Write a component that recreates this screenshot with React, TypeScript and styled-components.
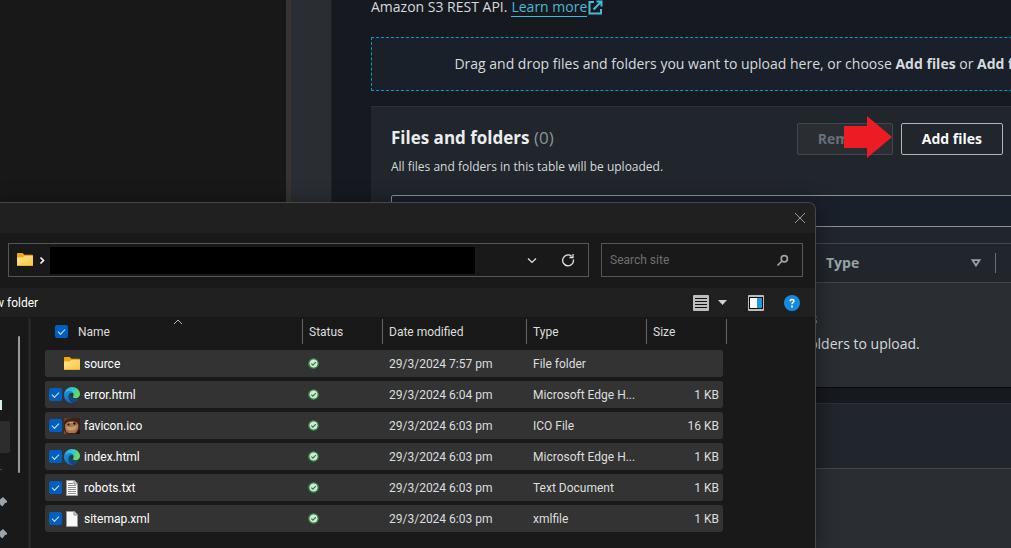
import React from "react";
import styled, { createGlobalStyle } from "styled-components";

const GlobalStyle = createGlobalStyle`
  *, *::before, *::after { box-sizing: border-box; }
  html, body, #root { height: 100%; }
  body {
    margin: 0;
    background: #171921;
    color: #d5dbdb;
    font-family: "Open Sans", "Noto Sans", sans-serif;
    font-size: 14px;
    line-height: 20px;
    overflow: hidden;
  }
`;

/* ---------- Console page ---------- */

const Page = styled.div`
  display: flex;
  height: 100%;
  position: relative;
  overflow: hidden;
`;

const Backdrop = styled.div`
  flex: none;
  width: 286px;
  background: #181818;
`;

const WindowEdge = styled.div`
  flex: none;
  width: 5px;
  background: #373432;
`;

const NavRail = styled.div`
  flex: none;
  width: 41px;
  background: #2a2e33;
  border-right: 1px solid #1e2126;
`;

const Main = styled.main`
  flex: 1;
  min-width: 0;
  overflow: hidden;
  padding: 0 0 0 39px;
`;

const Content = styled.div`
  min-width: 766px;
  display: flex;
  flex-direction: column;
`;

const Intro = styled.p`
  margin: 0;
  height: 17px;
  display: flex;
  align-items: flex-end;
`;

const ExternalLink = styled.a`
  display: flex;
  align-items: center;
  gap: 1px;
  margin-left: 4px;
  color: #44b9d6;
  text-decoration: none;

  span {
    line-height: 19px;
    border-bottom: 1px solid #44b9d6;
  }
`;

const DropZone = styled.div`
  margin-top: 20px;
  height: 54px;
  display: flex;
  align-items: center;
  justify-content: center;
  border: 1px dashed #00a1c9;
  background: #1a202a;
  white-space: pre;
`;

const Card = styled.section`
  margin-top: 15px;
  background: #21252c;
  border-top: 1px solid #2d3136;
  border-bottom: 1px solid #08090b;
`;

const CardHeader = styled.header`
  display: flex;
  justify-content: space-between;
  align-items: flex-start;
  padding: 16px 134px 0 20px;
`;

const CardTitle = styled.h2`
  margin: 4px 0 0;
  font-size: 17px;
  line-height: 22px;
  font-weight: 700;
  color: #eaeded;

  span {
    font-weight: 400;
    color: #879596;
  }
`;

const CardNote = styled.p`
  margin: 8px 0 0;
  font-size: 12px;
  line-height: 20px;
`;

const Actions = styled.div`
  display: flex;
  gap: 8px;
`;

const ActionButton = styled.button`
  height: 32px;
  padding: 0 20px;
  border: 1px solid #aab7b8;
  border-radius: 2px;
  background: #21252c;
  color: #fafafa;
  font: inherit;
  font-weight: 700;

  &:disabled {
    width: 96px;
    border-color: #414750;
    background: #2a2e33;
    color: #687078;
  }
`;

const FilterInput = styled.input`
  display: block;
  width: calc(100% - 40px);
  height: 32px;
  margin: 18px 20px 16px;
  border: 1px solid #879596;
  border-radius: 2px;
  background: #1a202a;
`;

const UploadTable = styled.table`
  width: 100%;
  table-layout: fixed;
  border-collapse: collapse;
`;

const UploadHead = styled.th`
  height: 39px;
  padding: 0;
  border-top: 1px solid #414750;
  border-bottom: 1px solid #414750;
  color: #95a5a6;
  text-align: left;

  &:first-child { width: 455px; }
  &:nth-child(2) { width: 170px; }
`;

const UploadHeadInner = styled.div`
  display: flex;
  align-items: center;
  justify-content: space-between;
  height: 20px;
  padding-right: 14px;
  border-right: 1px solid #687078;
`;

const EmptyCell = styled.td`
  height: 104px;
  padding: 0 0 6px 2px;
  background: #2a2e33;
  text-align: center;
  vertical-align: middle;

  strong {
    display: block;
    margin-bottom: 5px;
  }
`;

const CardBar = styled.div`
  height: 65px;
  border-bottom: 1px solid #414750;
`;

const CardFill = styled.div`
  height: 140px;
  background: #2a2e33;
`;

const Pointer = styled.svg`
  position: absolute;
  left: 844px;
  top: 116px;
  width: 49px;
  height: 42px;
`;

/* ---------- File picker window ---------- */

const Picker = styled.div`
  position: absolute;
  left: 0;
  top: 202px;
  bottom: 0;
  width: 816px;
  display: flex;
  flex-direction: column;
  overflow: hidden;
  border: solid #46474b;
  border-width: 1px 1px 0 0;
  border-radius: 0 8px 0 0;
  background: #191919;
  box-shadow: 0 2px 22px rgba(0, 0, 0, 0.45);
  color: #dedede;
  font-family: Roboto, "Open Sans", sans-serif;
  font-size: 12px;
  line-height: 16px;
`;

const TitleBar = styled.div`
  flex: none;
  display: flex;
  align-items: center;
  justify-content: flex-end;
  height: 30px;
  padding-right: 9px;
  background: #202020;
`;

const IconButton = styled.button`
  display: flex;
  padding: 0;
  border: 0;
  background: none;
  color: inherit;
`;

const AddressRow = styled.div`
  flex: none;
  display: flex;
  gap: 12px;
  padding: 10px 12px 11px 8px;
`;

const AddressBar = styled.div`
  flex: 1;
  display: flex;
  align-items: center;
  height: 34px;
  padding: 0 13px 0 8px;
  border: 1px solid #565656;
`;

const RedactedPath = styled.div`
  flex: 1;
  height: 27px;
  margin: 0 52px 0 1px;
  background: #000;
`;

const AddressTools = styled.div`
  display: flex;
  align-items: center;
  gap: 24px;
`;

const SearchBox = styled.label`
  flex: none;
  display: flex;
  align-items: center;
  width: 202px;
  height: 34px;
  padding: 0 13px 0 8px;
  border: 1px solid #565656;
`;

const SearchInput = styled.input`
  flex: 1;
  min-width: 0;
  padding: 0;
  border: 0;
  outline: 0;
  background: none;
  color: inherit;
  font: inherit;

  &::placeholder { color: #6f6f6f; opacity: 1; }
`;

const CommandBar = styled.div`
  flex: none;
  display: flex;
  align-items: center;
  justify-content: space-between;
  height: 30px;
  padding-right: 15px;
  background: #202020;
  border-bottom: 1px solid #171717;
`;

const NewFolder = styled.button`
  padding: 0;
  border: 0;
  margin-left: -5px;
  background: none;
  color: #fff;
  font: inherit;
`;

const ViewTools = styled.div`
  display: flex;
  align-items: center;

  button:nth-child(2) { margin: 0 21px 0 9px; }
  button:nth-child(4) { margin-left: 20px; }
`;

const Body = styled.div`
  flex: 1;
  display: flex;
  min-height: 0;
`;

const Tree = styled.div`
  flex: none;
  width: 10px;
  padding-top: 82px;
  overflow: hidden;
  color: #9ba3ab;
`;

const TreeLabel = styled.div`
  height: 10px;
  margin-bottom: 11px;
  border-left: 2px solid #d8f0e2;
`;

const TreeSelected = styled.div`
  height: 32px;
  border-radius: 0 2px 2px 0;
  background: #2d2d2d;
`;

const TreeRule = styled.div`
  width: 2px;
  height: 1px;
  margin: 16px 0 26px;
  background: #4a4a4a;
`;

const PinIcon = styled.svg`
  display: block;
  width: 8px;
  height: 12px;
  margin-bottom: 20px;
`;

const ScrollThumb = styled.div`
  flex: none;
  width: 2px;
  height: 137px;
  margin: 18px 8px 0;
  border-radius: 1px;
  background: #9b9b9b;
`;

const Splitter = styled.div`
  flex: none;
  width: 3px;
  background: #2b2b2b;
  border: solid #222;
  border-width: 0 1px;
`;

const FileTable = styled.table`
  flex: none;
  align-self: flex-start;
  width: 682px;
  margin-left: 14px;
  table-layout: fixed;
  border-collapse: separate;
  border-spacing: 0;
`;

const Column = styled.col<{ $width: number }>`
  width: ${(p) => p.$width}px;
`;

const HeadCell = styled.th`
  height: 28px;
  padding: 1px 0 0;
  font-weight: 400;
  text-align: left;
  vertical-align: top;
`;

const HeadInner = styled.div<{ $inset: number }>`
  position: relative;
  display: flex;
  align-items: center;
  gap: 10px;
  height: 25px;
  padding-left: ${(p) => p.$inset}px;
  border-right: 1px solid #636363;
`;

const SortMark = styled.svg`
  position: absolute;
  top: 0;
  left: 128px;
  width: 10px;
  height: 6px;
`;

const Cell = styled.td`
  height: 31px;
  padding: 0 0 0 6px;
  border-top: 4px solid transparent;
  background: #333;
  background-clip: padding-box;
  overflow: hidden;
  white-space: nowrap;

  &:first-child {
    padding-left: 4px;
    border-radius: 2px 0 0 2px / 6px 0 0 2px;
  }
  &:last-child {
    padding: 0 4px 0 0;
    border-radius: 0 2px 2px 0 / 0 6px 2px 0;
    text-align: right;
  }
`;

const NameInner = styled.div`
  display: flex;
  align-items: center;
  color: #fff;

  svg { margin: 0 4px 0 2px; }
`;

const Tick = styled.input`
  appearance: none;
  display: grid;
  place-items: center;
  flex: none;
  width: 13px;
  height: 13px;
  margin: 0;
  border-radius: 2px;

  &:checked { background: #0060c0; }
  &:checked::after {
    content: "";
    width: 7px;
    height: 4px;
    margin-bottom: 2px;
    border: solid #cfe4f8;
    border-width: 0 0 1px 1px;
    transform: rotate(-45deg);
  }
`;

/* ---------- Icons ---------- */

const FolderIcon = () => (
  <svg width="16" height="16" viewBox="0 0 16 16" aria-hidden="true">
    <defs>
      <linearGradient id="folder" x1="0" y1="0" x2="1" y2="1">
        <stop offset="0" stopColor="#ffe49a" />
        <stop offset="1" stopColor="#fbc43a" />
      </linearGradient>
    </defs>
    <path d="M0 2C0 1.400.4 1 1 1h4.600l1.800 1.800H15c.6 0 1 .4 1 1V8H0z" fill="#f5a70c" />
    <path d="M0 5.500h5.600l1.900-1.600H15c.6 0 1 .4 1 1v8c0 .6-.4 1-1 1H1c-.6 0-1-.4-1-1z" fill="url(#folder)" />
    <path d="M.3 13.500h15.400" stroke="#e9a92a" strokeWidth=".8" />
  </svg>
);

const EdgeIcon = () => (
  <svg width="16" height="16" viewBox="0 0 16 16" aria-hidden="true">
    <defs>
      <linearGradient id="edgeTop" x1="0" y1="0" x2="1" y2=".35">
        <stop offset="0" stopColor="#2fa9e8" />
        <stop offset=".55" stopColor="#33c5cf" />
        <stop offset="1" stopColor="#66e05a" />
      </linearGradient>
      <linearGradient id="edgeLeft" x1="0" y1="0" x2=".5" y2="1">
        <stop offset="0" stopColor="#1a9be4" />
        <stop offset="1" stopColor="#0c67bd" />
      </linearGradient>
    </defs>
    <path d="M.2 7C.8 3 4 0 8 0c4.600 0 8 3.300 8 7 0 2.600-2 4.200-4.300 4.200-2 0-2.900-.7-2.900-1.200 0-.6.8-.7.8-2.200C9.600 6 7.800 4.800 5.600 4.800 3 4.800 1 6 .2 7z" fill="url(#edgeTop)" />
    <path d="M0 8c.2-2.600 2.600-4 5.300-4C8 4 9.700 5.800 9.700 7.600c0-.9-1-1.500-2-1.500-2 0-3.200 1.700-3.200 3.800 0 3 2.300 5.200 5 5.900-.5.100-1 .2-1.500.2C3.500 16 0 12.500 0 8z" fill="url(#edgeLeft)" />
    <path d="M6.500 6.500C5.300 7.400 5 8.700 5 9.900c0 3 2.700 5.200 5.400 5.200 1.900-.6 3.400-1.800 4.300-3.200.3-.4 0-.8-.5-.5-.8.4-1.700.6-2.600.6-3 0-5.200-1.600-5.100-5.500z" fill="#114a8b" />
  </svg>
);

const FrogIcon = () => (
  <svg width="16" height="16" viewBox="0 0 16 16" aria-hidden="true">
    <rect width="16" height="16" fill="#3b2018" />
    <path d="M0 4l4-3 5-1H0z" fill="#6b3a26" />
    <path d="M1 8c0-3 3-5 6-4.500C10 3 13 4 14 6c1 3 0 7-3 9H4C2 14 1 11 1 8z" fill="#a8754c" />
    <path d="M2 8.500c3 1 8 .5 11-1-.3 3-2.500 5-5.500 5S2.500 11 2 8.500z" fill="#c99a70" />
    <circle cx="4.500" cy="6.500" r="1" fill="#1d0f0a" />
    <circle cx="10.500" cy="5.500" r="1.200" fill="#1d0f0a" />
    <path d="M5 4.500h4" stroke="#cf9a5a" />
    <path d="M0 16v-4l3 4z" fill="#7c4a33" />
    <path d="M12 16l4-5v5z" fill="#1f1210" />
  </svg>
);

const PageIcon = ({ lined }: { lined?: boolean }) => (
  <svg width="16" height="16" viewBox="0 0 16 16" aria-hidden="true">
    <path d="M2.500.5h7.800l3.200 3.200v11.800h-11z" fill="#f8f8f8" stroke="#9a9a9a" />
    <path d="M10 .5v3.500h3.500" fill="#d5d5d5" stroke="#8a8a8a" />
    {lined && <path d="M4 3.500h5M4 5.500h8M4 7.500h8M4 9.500h8M4 11.500h8M4 13.500h8" stroke="#8f8f8f" />}
  </svg>
);

const SyncedIcon = () => (
  <svg width="11" height="11" viewBox="0 0 11 11" role="img" aria-label="Synced">
    <circle cx="5.500" cy="5.500" r="4.700" fill="#e0e0e0" stroke="#22923a" strokeWidth="1.300" />
    <path d="M3.300 5.600l1.600 1.500 2.900-3" fill="none" stroke="#1d8a36" strokeWidth="1.300" />
  </svg>
);

const StatusMark = styled.span`
  display: flex;
  margin-left: -1px;
`;

const icons = {
  folder: <FolderIcon />,
  edge: <EdgeIcon />,
  frog: <FrogIcon />,
  text: <PageIcon lined />,
  page: <PageIcon />,
};

type FileRow = { name: string; icon: keyof typeof icons; date: string; type: string; size: string; checked: boolean };

const files: FileRow[] = [
  { name: "source", icon: "folder", date: "29/3/2024 7:57 pm", type: "File folder", size: "", checked: false },
  { name: "error.html", icon: "edge", date: "29/3/2024 6:04 pm", type: "Microsoft Edge H...", size: "1 KB", checked: true },
  { name: "favicon.ico", icon: "frog", date: "29/3/2024 6:03 pm", type: "ICO File", size: "16 KB", checked: true },
  { name: "index.html", icon: "edge", date: "29/3/2024 6:03 pm", type: "Microsoft Edge H...", size: "1 KB", checked: true },
  { name: "robots.txt", icon: "text", date: "29/3/2024 6:03 pm", type: "Text Document", size: "1 KB", checked: true },
  { name: "sitemap.xml", icon: "page", date: "29/3/2024 6:03 pm", type: "xmlfile", size: "1 KB", checked: true },
];

const columnWidths = [258, 80, 144, 120, 76, 4];

const Pin = () => (
  <PinIcon viewBox="0 0 8 12" aria-hidden="true">
    <path d="M0 3.500L3 1l4 4v1.500L5 7 2.500 10.500 0 8.500z" fill="currentColor" />
  </PinIcon>
);

function FilePicker() {
  return (
    <Picker role="dialog" aria-label="Open">
      <TitleBar>
        <IconButton aria-label="Close">
          <svg width="12" height="12" viewBox="0 0 12 12" stroke="#9a9a9a">
            <path d="M1 1l10 10M11 1L1 11" />
          </svg>
        </IconButton>
      </TitleBar>

      <AddressRow>
        <AddressBar>
          <FolderIcon />
          <svg width="16" height="12" viewBox="0 0 16 12" fill="none" stroke="#fff" strokeWidth="1.600">
            <path d="M7.500 3.500l3 3-3 3" />
          </svg>
          <RedactedPath />
          <AddressTools>
            <IconButton aria-label="Previous locations">
              <svg width="10" height="10" viewBox="0 0 10 10" fill="none" stroke="#e4e4e4" strokeWidth="1.200">
                <path d="M1 3.500l4 4 4-4" />
              </svg>
            </IconButton>
            <IconButton aria-label="Refresh">
              <svg width="14" height="14" viewBox="0 0 14 14" fill="none" stroke="#e4e4e4" strokeWidth="1.300">
                <path d="M12.400 6.500A5.400 5.400 0 1 1 10.500 3.200M12 1v3.500H8.500" />
              </svg>
            </IconButton>
          </AddressTools>
        </AddressBar>
        <SearchBox>
          <SearchInput type="text" placeholder="Search site" aria-label="Search site" />
          <svg width="13" height="13" viewBox="0 0 13 13" fill="none" stroke="#a0a0a0" strokeWidth="1.700">
            <circle cx="8.300" cy="4.700" r="3.100" />
            <path d="M6 7L1.500 11.500" />
          </svg>
        </SearchBox>
      </AddressRow>

      <CommandBar>
        <NewFolder>w folder</NewFolder>
        <ViewTools>
          <IconButton aria-label="Change view">
            <svg width="16" height="16" viewBox="0 0 16 16">
              <rect width="16" height="16" rx="1" fill="#bdbdbd" />
              <path d="M2 3.500h12M2 6.500h12M2 9.500h12M2 12.500h12" stroke="#111" />
            </svg>
          </IconButton>
          <IconButton aria-label="More view options">
            <svg width="9" height="5" viewBox="0 0 9 5">
              <path d="M0 0h9L4.500 5z" fill="#cfcfcf" />
            </svg>
          </IconButton>
          <IconButton aria-label="Preview pane">
            <svg width="16" height="16" viewBox="0 0 16 16">
              <rect width="16" height="16" rx="1" fill="#bdbdbd" />
              <rect x="1" y="2" width="14" height="12" fill="#0a0a0a" />
              <rect x="2" y="3" width="7" height="10" fill="#fff" />
              <rect x="9" y="3" width="5" height="10" fill="#1a98e0" />
            </svg>
          </IconButton>
          <IconButton aria-label="Help">
            <svg width="16" height="16" viewBox="0 0 16 16">
              <circle cx="8" cy="8" r="8" fill="#128be0" />
              <path d="M6.200 6.300c0-2.600 3.700-2.300 3.700-.3C9.900 7.400 8 7.500 8 9.300" fill="none" stroke="#fff" strokeWidth="1.500" />
              <circle cx="8" cy="11.400" r="1" fill="#fff" />
            </svg>
          </IconButton>
        </ViewTools>
      </CommandBar>

      <Body>
        <Tree>
          <TreeLabel />
          <TreeSelected />
          <TreeRule />
          <Pin />
          <Pin />
        </Tree>
        <ScrollThumb />
        <Splitter />
        <FileTable>
          <colgroup>
            {columnWidths.map((w) => (
              <Column key={w} $width={w} />
            ))}
          </colgroup>
          <thead>
            <tr>
              <HeadCell>
                <HeadInner $inset={10}>
                  <Tick type="checkbox" defaultChecked aria-label="Select all" />
                  Name
                  <SortMark viewBox="0 0 10 6" fill="none" stroke="#b5b5b5">
                    <path d="M1 5l4-4 4 4" />
                  </SortMark>
                </HeadInner>
              </HeadCell>
              <HeadCell><HeadInner $inset={6}>Status</HeadInner></HeadCell>
              <HeadCell><HeadInner $inset={6}>Date modified</HeadInner></HeadCell>
              <HeadCell><HeadInner $inset={6}>Type</HeadInner></HeadCell>
              <HeadCell colSpan={2}><HeadInner $inset={6}>Size</HeadInner></HeadCell>
            </tr>
          </thead>
          <tbody>
            {files.map((f) => (
              <tr key={f.name}>
                <Cell>
                  <NameInner>
                    <Tick type="checkbox" defaultChecked={f.checked} aria-label={f.name} />
                    {icons[f.icon]}
                    {f.name}
                  </NameInner>
                </Cell>
                <Cell><StatusMark><SyncedIcon /></StatusMark></Cell>
                <Cell>{f.date}</Cell>
                <Cell>{f.type}</Cell>
                <Cell>{f.size}</Cell>
              </tr>
            ))}
          </tbody>
        </FileTable>
      </Body>
    </Picker>
  );
}

export default function App() {
  return (
    <>
      <GlobalStyle />
      <Page>
        <Backdrop />
        <WindowEdge />
        <NavRail />
        <Main>
          <Content>
            <Intro>
              Amazon S3 REST API.
              <ExternalLink href="#learn-more">
                <span>Learn more</span>
                <svg width="15" height="15" viewBox="0 0 15 15" fill="none" stroke="#44b9d6" strokeWidth="2">
                  <path d="M6 2H1.500v11.500H13V9M8.500 1.500H13.500V6.500M13.200 1.800L5.500 9.500" />
                </svg>
              </ExternalLink>
            </Intro>

            <DropZone>
              Drag and drop files and folders you want to upload here, or choose <b>Add files</b> or <b>Add folder</b>.
            </DropZone>

            <Card>
              <CardHeader>
                <div>
                  <CardTitle>Files and folders <span>(0)</span></CardTitle>
                  <CardNote>All files and folders in this table will be uploaded.</CardNote>
                </div>
                <Actions>
                  <ActionButton disabled>Remove</ActionButton>
                  <ActionButton>Add files</ActionButton>
                </Actions>
              </CardHeader>
              <FilterInput type="search" aria-label="Find by name" />
              <UploadTable>
                <thead>
                  <tr>
                    <UploadHead aria-label="Name" />
                    <UploadHead>
                      <UploadHeadInner>
                        Type
                        <svg width="10" height="8" viewBox="0 0 10 8" fill="none" stroke="#95a5a6" strokeWidth="1.800">
                          <path d="M1.500 1.200h7L5 6.500z" />
                        </svg>
                      </UploadHeadInner>
                    </UploadHead>
                    <UploadHead aria-label="Size" />
                  </tr>
                </thead>
                <tbody>
                  <tr>
                    <EmptyCell colSpan={3}>
                      <strong>No files or folders</strong>
                      You have not chosen any files or folders to upload.
                    </EmptyCell>
                  </tr>
                </tbody>
              </UploadTable>
            </Card>

            <Card>
              <CardBar />
              <CardFill />
            </Card>
          </Content>
        </Main>

        <Pointer viewBox="0 0 49 42" aria-hidden="true">
          <path d="M0 10h23V0l25 21-25 21V32H0z" fill="#ed1c24" />
        </Pointer>
        <FilePicker />
      </Page>
    </>
  );
}
